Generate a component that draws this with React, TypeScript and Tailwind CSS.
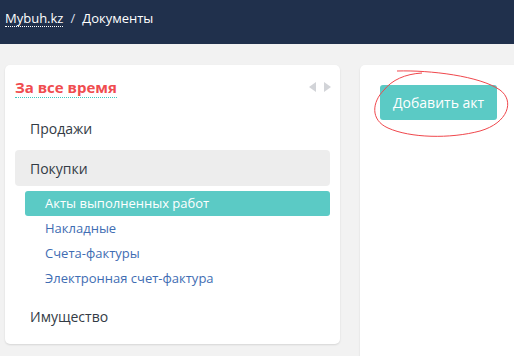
const subItems = ["Накладные", "Счета-фактуры", "Электронная счет-фактура"];

export default function App() {
  return (
    <div className="w-[514px] h-[356px] overflow-hidden bg-[#f2f2f2] font-['Open_Sans',sans-serif]">
      <div className="h-[44px] bg-[#20304c] flex items-center px-[5px] pb-[7px] text-[13px] text-white">
        <span className="border-b border-dotted border-white leading-[16px]">Mybuh.kz</span>
        <span className="mx-[7px] text-[#d8dde6]">/</span>
        <span>Документы</span>
      </div>

      <div className="flex gap-[20px] pl-[5px] pt-[21px]">
        <div className="w-[335px] h-[279px] shrink-0 bg-white rounded-[5px] shadow-[0_1px_2px_rgba(0,0,0,0.12)] px-[10px] pt-[12px]">
          <div className="flex items-center justify-between">
            <span className="text-[15px] font-bold text-[#f04c4f] leading-[20px] border-b border-dotted border-[#3cc9c0]">
              За все время
            </span>
            <div className="flex items-center gap-[8px] text-[#d2d4d8] mr-[-1px] mb-[2px]">
              <svg width="7" height="10" viewBox="0 0 7 10"><path d="M7 0 L0 5 L7 10 Z" fill="currentColor" /></svg>
              <svg width="7" height="10" viewBox="0 0 7 10"><path d="M0 0 L7 5 L0 10 Z" fill="currentColor" /></svg>
            </div>
          </div>

          <div className="mt-[13px] text-[14px] text-[#333b45]">
            <div className="h-[34px] flex items-center pl-[15px]">Продажи</div>
            <div className="h-[36px] mt-[5px] flex items-center pl-[15px] bg-[#ededed] rounded-[4px]">Покупки</div>
            <div className="pl-[10px] pt-[5px]">
              <div className="h-[25px] flex items-center pl-[20px] bg-[#5bcac5] rounded-[3px] text-[13px] text-white">
                Акты выполненных работ
              </div>
              {subItems.map((s) => (
                <div key={s} className="h-[25px] flex items-center pl-[20px] text-[13px] text-[#3f6db3]">
                  {s}
                </div>
              ))}
            </div>
            <div className="h-[34px] mt-[8px] flex items-center pl-[15px]">Имущество</div>
          </div>
        </div>

        <div className="relative flex-1 h-[300px] bg-white rounded-l-[5px] shadow-[0_1px_2px_rgba(0,0,0,0.12)] pl-[20px] pt-[20px]">
          <button className="h-[35px] px-[13px] bg-[#5bcac5] rounded-[3px] text-[14px] text-white">
            Добавить акт
          </button>
          <svg className="absolute left-[10px] top-[3px] pointer-events-none" width="140" height="72" viewBox="0 0 140 72">
            <path
              d="M27 3 C60 2 110 8 130 22 C145 33 138 55 110 63 C80 71 40 70 18 60 C0 52 2 34 14 22 C22 12 35 6 52 5"
              fill="none"
              stroke="#f0474c"
              strokeWidth="1"
            />
          </svg>
        </div>
      </div>
    </div>
  );
}
